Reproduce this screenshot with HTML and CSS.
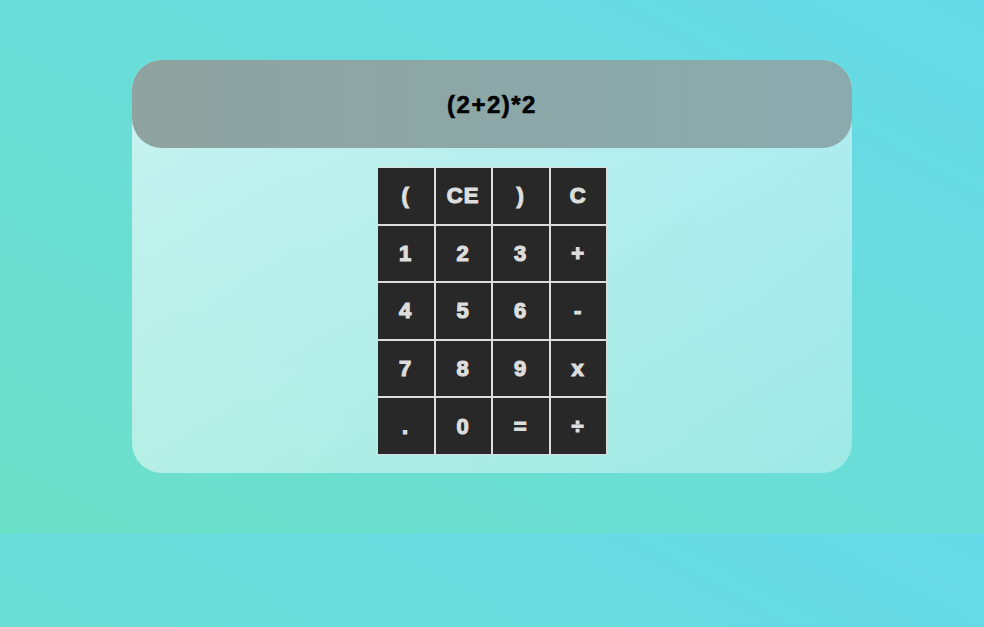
FILE: index.html
```html
<!DOCTYPE html>
<html lang="en">
<head>
<meta charset="utf-8">
<title>Calculator</title>
<link rel="stylesheet" href="styles.css">
</head>
<body>
<div class="calc">
  <div class="display">(2+2)*2</div>
  <div class="keys">
    <button class="key">(</button>
    <button class="key">CE</button>
    <button class="key">)</button>
    <button class="key">C</button>
    <button class="key">1</button>
    <button class="key">2</button>
    <button class="key">3</button>
    <button class="key">+</button>
    <button class="key">4</button>
    <button class="key">5</button>
    <button class="key">6</button>
    <button class="key">-</button>
    <button class="key">7</button>
    <button class="key">8</button>
    <button class="key">9</button>
    <button class="key">x</button>
    <button class="key">.</button>
    <button class="key">0</button>
    <button class="key">=</button>
    <button class="key">÷</button>
  </div>
</div>
</body>
</html>
```
FILE: styles.css
```css
html {
  margin: 0;
  padding: 0;
}
body {
  margin: 0;
  padding: 60px 0;
  background: linear-gradient(to top right, #6de0c8, #66dae8);
  font-family: "Liberation Sans", Arial, sans-serif;
}
.calc {
  width: 720px;
  height: 413px;
  margin: 0 auto;
  box-sizing: border-box;
  border-radius: 30px;
  background: linear-gradient(to bottom right, rgba(255, 255, 255, 0.63), rgba(255, 255, 255, 0.35));
  display: flex;
  flex-direction: column;
  align-items: center;
}
.display {
  align-self: stretch;
  height: 88px;
  padding-top: 1px;
  box-sizing: border-box;
  border-radius: 30px;
  background: linear-gradient(to right, #8fa3a0, #8aabae);
  display: flex;
  align-items: center;
  justify-content: center;
  font-weight: bold;
  font-size: 24px;
  letter-spacing: 1.5px;
  -webkit-text-stroke: 0.6px #000;
  color: #000;
}
.keys {
  margin-top: 19px;
  display: grid;
  grid-template-columns: repeat(4, 57.5px);
  grid-auto-rows: 57.6px;
}
.key {
  box-sizing: border-box;
  margin: 0;
  padding: 1px 0 0;
  border: 1px solid #dddddd;
  background: #282828;
  color: #dddddd;
  font-family: "Liberation Sans", Arial, sans-serif;
  font-weight: bold;
  font-size: 22px;
  letter-spacing: 1.2px;
  -webkit-text-stroke: 1.2px #dddddd;
}
```
